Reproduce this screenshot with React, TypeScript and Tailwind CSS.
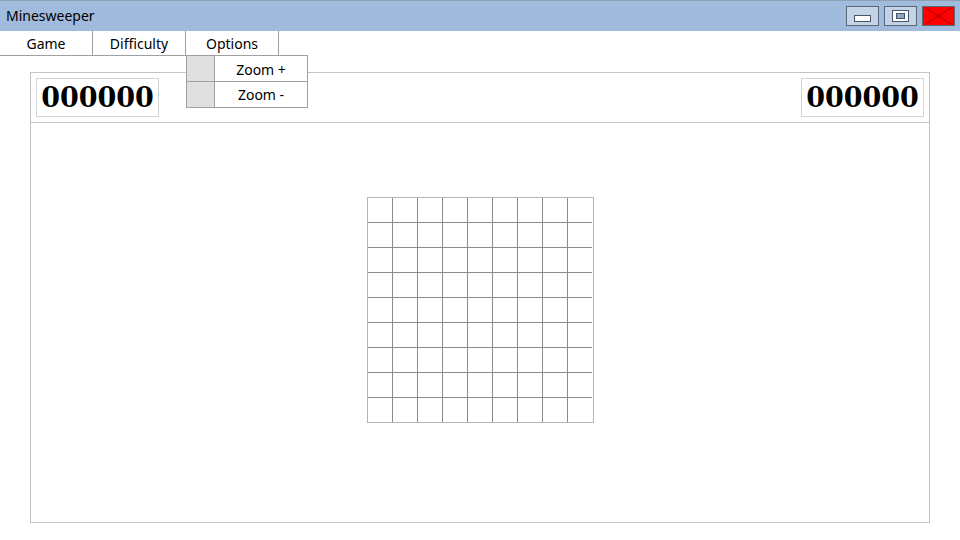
import React from "react";

const font = { fontFamily: '"Noto Sans", "Open Sans", sans-serif' };

export default function App() {
  const cells = Array.from({ length: 81 }, (_, i) => i);
  return (
    <div className="relative w-[960px] h-[540px] bg-white overflow-hidden text-black" style={font}>
      {/* Title bar */}
      <div className="h-[31px] bg-[#a0bbdb] border-t border-[#8f9fb3] flex items-center justify-between">
        <span className="pl-[6px] text-[14px] leading-none">Minesweeper</span>
        <div className="flex items-center gap-[5px] pr-[5px]">
          <div className="w-[33px] h-[20px] bg-[#c3d4e8] border border-[#5a6878] flex items-center justify-center">
            <div className="w-[17px] h-[7px] bg-white border border-[#4a5563] mt-[4px]" />
          </div>
          <div className="w-[33px] h-[20px] bg-[#c3d4e8] border border-[#5a6878] flex items-center justify-center">
            <div className="w-[17px] h-[12px] bg-white border border-[#4a5563] flex items-center justify-center">
              <div className="w-[9px] h-[6px] bg-[#8fa8c4] border border-[#4a5563]" />
            </div>
          </div>
          <div className="w-[33px] h-[20px] bg-[#ff0000] border border-[#5a6878]">
            <svg width="31" height="18" viewBox="0 0 31 18">
              <line x1="3" y1="1" x2="28" y2="17" stroke="#a00000" strokeWidth="1" />
              <line x1="28" y1="1" x2="3" y2="17" stroke="#a00000" strokeWidth="1" />
            </svg>
          </div>
        </div>
      </div>

      {/* Menu bar */}
      <div className="flex">
        {["Game", "Difficulty", "Options"].map((m) => (
          <div
            key={m}
            className="w-[93px] h-[25px] border-r border-b border-[#a0a0a0] flex items-center justify-center text-[14px]"
          >
            {m}
          </div>
        ))}
      </div>

      {/* Dropdown */}
      <div className="absolute left-[186px] top-[55px] w-[122px] border border-[#a0a0a0] bg-white z-10">
        <div className="flex h-[26px] border-b border-[#a0a0a0]">
          <div className="w-[28px] bg-[#e0e0e0] border-r border-[#a0a0a0]" />
          <div className="flex-1 flex items-center justify-center text-[14px] pt-[2px]">Zoom +</div>
        </div>
        <div className="flex h-[25px]">
          <div className="w-[28px] bg-[#e0e0e0] border-r border-[#a0a0a0]" />
          <div className="flex-1 flex items-center justify-center text-[14px]">Zoom -</div>
        </div>
      </div>

      {/* Main panel */}
      <div className="ml-[30px] mt-[16px] w-[900px] h-[451px] border border-[#c4c4c4] flex flex-col">
        <div className="h-[50px] border-b border-[#c4c4c4] flex items-center justify-between px-[5px]">
          {[0, 1].map((k) => (
            <div
              key={k}
              className="w-[123px] h-[39px] border border-[#d4d4d4] flex items-center justify-center text-[27px] font-bold leading-none"
              style={{ fontFamily: '"DejaVu Serif", serif' }}
            >
              000000
            </div>
          ))}
        </div>
        <div className="flex-1 flex justify-center pt-[74px]">
          <div className="self-start grid grid-cols-9 border border-[#b4b4b4]">
            {cells.map((i) => {
              const lastCol = i % 9 === 8;
              const lastRow = i >= 72;
              let cls = "w-[25px] h-[25px] border-r border-b border-[#8c8c8c]";
              if (lastCol && lastRow) cls = "w-[24px] h-[24px]";
              else if (lastCol) cls = "w-[24px] h-[25px] border-b border-[#8c8c8c]";
              else if (lastRow) cls = "w-[25px] h-[24px] border-r border-[#8c8c8c]";
              return <div key={i} className={cls} />;
            })}
          </div>
        </div>
      </div>
    </div>
  );
}
